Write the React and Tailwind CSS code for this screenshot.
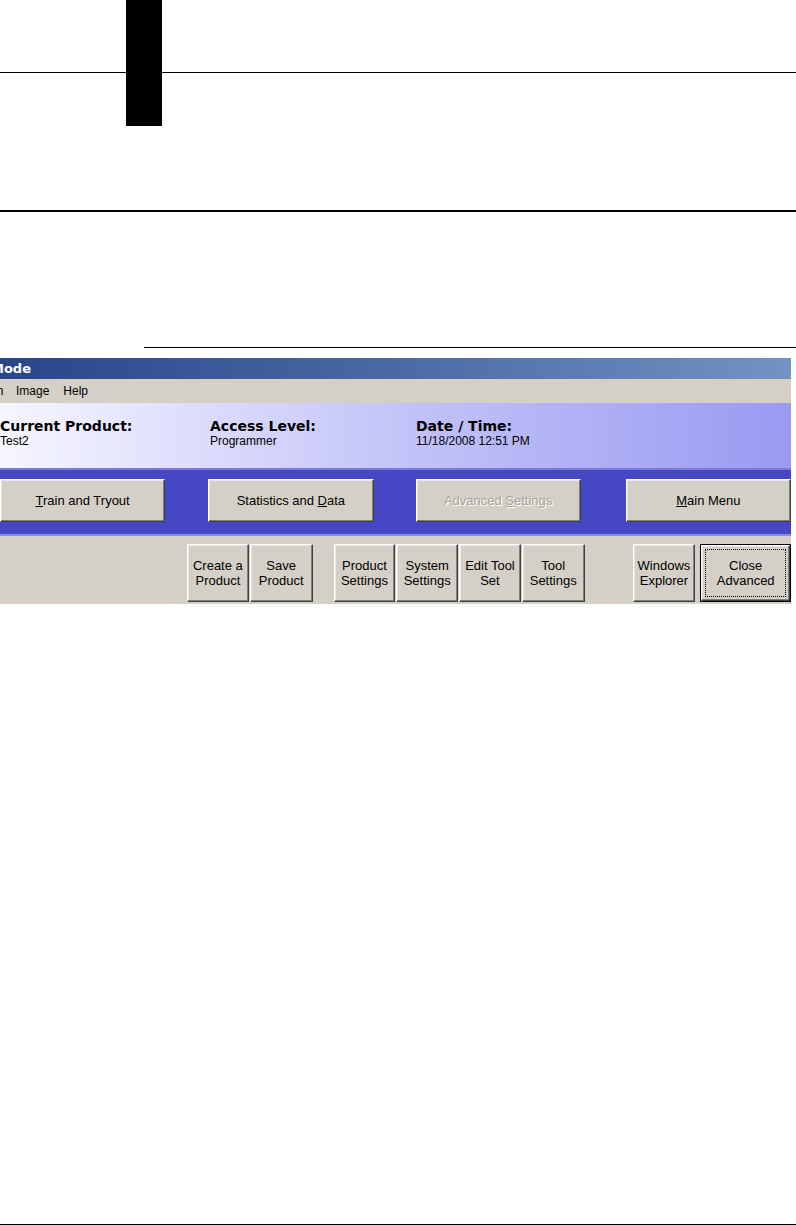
import React from 'react';

const ui = { fontFamily: '"Liberation Sans", Arial, sans-serif' };
const heavy = { fontFamily: '"DejaVu Sans", Verdana, sans-serif' };

const bevel =
    'bg-[#d4d0c8] border border-t-white border-l-white border-r-[#404040] border-b-[#404040] shadow-[inset_-1px_-1px_0_#808080,inset_1px_1px_0_#e8e6e0]';

const BigButton = ({ children, disabled, className = '' }) => (
    <div
        className={`${bevel} h-[43px] w-[166px] flex items-center justify-center text-[13px] ${disabled ? 'text-[#a8a49c] [text-shadow:1px_1px_0_#ffffff]' : 'text-black'} ${className}`}
    >
        {children}
    </div>
);

const ToolButton = ({ top, bottom, className = '' }) => (
    <div className={`${bevel} h-[58px] w-[62px] flex flex-col items-center justify-center text-[13px] leading-[15px] text-black ${className}`}>
        <span>{top}</span>
        <span>{bottom}</span>
    </div>
);

const InfoBlock = ({ label, value, className = '' }) => (
    <div className={className}>
        <div className="text-[14px] font-bold leading-[16px] text-black" style={heavy}>{label}</div>
        <div className="text-[12px] leading-[15px] text-black">{value}</div>
    </div>
);

const App = () => {
    return (
        <div className="relative w-[796px] h-[1225px] bg-white overflow-hidden" style={ui}>
            {/* page header rules */}
            <div className="h-[73px] border-b border-black" />
            <div className="absolute left-[126px] top-0 w-[36px] h-[126px] bg-black" />
            <div className="mt-[137px] h-[2px] bg-black" />
            <div className="mt-[135px] ml-[144px] h-px bg-black" />

            {/* screenshot of the app window */}
            <div className="mt-[10px] w-[791px] overflow-hidden">
                <div className="h-[21px] bg-gradient-to-r from-[#28468a] via-[#4a6aa4] to-[#7393c3] flex items-center">
                    <span className="-ml-[9px] text-[13px] font-bold text-white" style={heavy}>Mode</span>
                </div>

                <div className="h-[24px] bg-[#d4d0c8] flex items-center text-[12px] text-black">
                    <span className="-ml-[32px] w-[36px]">Option</span>
                    <span className="ml-[12px]">Image</span>
                    <span className="ml-[14px]">Help</span>
                </div>

                <div className="h-[65px] bg-gradient-to-r from-[#f6f6ff] via-[#c4c4f8] to-[#9a9af2] flex pt-[15px]">
                    <InfoBlock label="Current Product:" value="Test2" className="w-[210px]" />
                    <InfoBlock label="Access Level:" value="Programmer" className="w-[206px]" />
                    <InfoBlock label="Date / Time:" value="11/18/2008 12:51 PM" />
                </div>

                <div className="h-[68px] bg-[#4747c6] border-t-2 border-t-[#7a7ae0] border-b-2 border-b-[#8a8ae8] flex items-start pt-[9px]">
                    <BigButton>
                        <span><span className="underline">T</span>rain and Tryout</span>
                    </BigButton>
                    <BigButton className="ml-[43px]">
                        <span>Statistics and <span className="underline">D</span>ata</span>
                    </BigButton>
                    <BigButton disabled className="ml-[42px] w-[165px]">
                        <span>Advanced <span className="underline">S</span>ettings</span>
                    </BigButton>
                    <BigButton className="ml-[45px] w-[165px]">
                        <span><span className="underline">M</span>ain Menu</span>
                    </BigButton>
                </div>

                <div className="h-[68px] bg-[#d4d0c8] flex items-start pt-[8px] pl-[187px]">
                    <ToolButton top="Create a" bottom="Product" />
                    <ToolButton top="Save" bottom="Product" className="ml-[1px] w-[63px]" />
                    <ToolButton top="Product" bottom="Settings" className="ml-[21px]" />
                    <ToolButton top="System" bottom="Settings" className="ml-[1px]" />
                    <ToolButton top="Edit Tool" bottom="Set" className="ml-[1px]" />
                    <ToolButton top="Tool" bottom="Settings" className="ml-[1px] w-[63px]" />
                    <ToolButton top="Windows" bottom="Explorer" className="ml-[48px] w-[63px]" />
                    <div className="ml-[5px] h-[58px] w-[91px] border border-black">
                        <div className={`${bevel} h-full w-full p-[3px]`}>
                            <div className="h-full w-full border border-dotted border-black flex flex-col items-center justify-center text-[13px] leading-[15px] text-black">
                                <span>Close</span>
                                <span>Advanced</span>
                            </div>
                        </div>
                    </div>
                </div>
            </div>

            <div className="mt-[620px] h-px bg-black" />
        </div>
    );
};

export default App;
